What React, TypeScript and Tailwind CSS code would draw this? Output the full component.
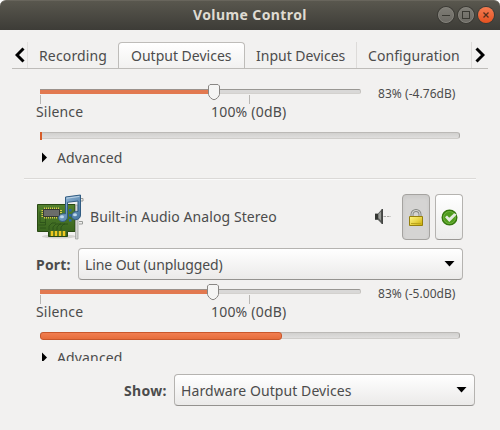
import { useState } from 'react'
import type { ReactNode } from 'react'

type ChannelProps = {
  value: number
  level: number
  db: string
}

// Volume slider with its marks, peak meter and expander
function Channel({ value, level, db }: ChannelProps) {
  return (
    <div className="h-[96px]">
      <div className="flex h-[52px] pl-[12px]">
        <div className="relative h-[51px] w-[321px] shrink-0">
          <div className="mt-[9px] h-[5px] w-full rounded-[2px] border border-t-[#999793] border-r-[#c4c2be] border-b-[#d3d1ce] border-l-[#bdbab7] bg-[#d9d8d7]" />
          <div
            className="absolute top-[9px] left-0 h-[5px] border-t border-[#9b918b] bg-[#e27950]"
            style={{ width: value }}
          />
          <svg
            className="absolute top-[4px] h-[17px] w-[12px]"
            style={{ left: value - 5 }}
            viewBox="0 0 12 17"
          >
            <path
              d="M2 .5h8l1.500 1.500v8.400c0 1.600-3.300 5.300-5.500 5.300S.5 12 .5 10.400V2z"
              fill="#f5f5f4"
              stroke="#898784"
            />
          </svg>
          <div className="absolute top-[15px] left-0 h-[9px] w-px bg-[#b8b6b3]" />
          <div className="absolute top-[15px] left-[209px] h-[9px] w-px bg-[#b8b6b3]" />
          <span className="absolute top-[22px] left-[-4px] leading-5 tracking-[0.17px]">Silence</span>
          <span className="absolute top-[22px] left-[171px] leading-5 tracking-[0.2px]">100% (0dB)</span>
        </div>
        <span className="mt-[6px] ml-[17px] text-[12px] leading-4 tracking-[0.05px]">{db}</span>
      </div>
      <div className="ml-[12px] h-[7px] w-[420px] rounded-[3px] border border-t-[#bbb9b6] border-r-[#aaa8a5] border-b-[#cfcdca] border-l-[#aaa8a5] bg-linear-to-b from-[#d1d0ce] to-[#dfdedd]">
        <div
          className={
            level > 10
              ? 'mt-[-1px] ml-[-1px] h-[8px] rounded-[3px] border border-[#c9572b] bg-linear-to-b from-[#f17e50] to-[#e66d3b]'
              : 'mt-[-1px] ml-[-1px] h-[8px] bg-[#d65c29]'
          }
          style={{ width: level }}
        />
      </div>
      <div className="flex h-[37px] items-center pl-[13px]">
        <svg className="mt-[-1px] h-[11px] w-[7px]" viewBox="0 0 7 11">
          <path d="M1 .5 6 5.5 1 10.5z" fill="#000" />
        </svg>
        <span className="ml-[9px] tracking-[0.15px]">Advanced</span>
      </div>
    </div>
  )
}

function Combo({ children, className }: { children: ReactNode; className: string }) {
  return (
    <button
      className={`flex h-[32px] items-center justify-between rounded-[4px] border border-[#b5b3b0] border-b-[#94928f] bg-linear-to-b from-white to-[#ebeae9] pr-[7px] pl-[6px] ${className}`}
    >
      <span>{children}</span>
      <svg className="h-[6px] w-[11px]" viewBox="0 0 11 6">
        <path d="M.5 0h10L5.5 5.5z" fill="#000" />
      </svg>
    </button>
  )
}

function SoundCardIcon() {
  return (
    <svg className="mt-[-2px] h-[48px] w-[48px] shrink-0" viewBox="0 0 48 48">
      <defs>
        <linearGradient id="board" x1="0" y1="0" x2="0" y2="1">
          <stop offset="0" stopColor="#52802e" />
          <stop offset="1" stopColor="#36611c" />
        </linearGradient>
        <linearGradient id="note" x1="0" y1="0" x2="1" y2="1">
          <stop offset="0" stopColor="#9bbddb" />
          <stop offset="1" stopColor="#3f719d" />
        </linearGradient>
      </defs>
      <ellipse cx="23" cy="44.5" rx="17" ry="2" fill="#d4d3d0" />
      <path d="M43 6.5h4v2.5h-3M43 29.5h3.5v2.5H43" fill="none" stroke="#9a9c99" />
      <path d="M1.5 12.5H39v27h-7.5v5h-19v-5h-11z" fill="url(#board)" stroke="#294913" />
      <path d="M39.5 13H42v34h-2.5z" fill="#d3d4d2" stroke="#999b98" strokeWidth=".7" />
      <path
        d="M9.5 27v6h-7M13 38v-4l3-3h4m-3 7v-3l3-3h5m-4 6v-3l3-3h5m-4 6v-3l3-3h4M4 36h6M4 19.5v11h5"
        fill="none"
        stroke="#294f18"
        strokeWidth=".8"
      />
      <path d="M8 16.5h16M8 25.5h16" stroke="#ddca4b" strokeWidth="2" strokeDasharray="1 1" />
      <path d="M6.5 18v7M25 18v7" stroke="#ddca4b" strokeWidth="2" strokeDasharray="1 1" />
      <path d="M7.5 17.5h16v7h-16z" fill="#6b6d6a" stroke="#353834" />
      <path d="M16 39v5m4-5v5m4-5v5m4-5v5" stroke="#efc922" strokeWidth="2.6" />
      <path d="M33 17h2.5v2.5H33zm0 5h2.5v2.5H33zm0 5h2.5v2.5H33z" fill="#2865a4" />
      <path
        d="M29.500 5 44.500 3v20c0 2.600-2 4.700-4.700 4.700-2.500 0-4.300-1.500-4.300-3.900 0-3 3-4.800 6.500-4.300V9l-10.500 1.300V25c0 2.600-2.300 4.500-4.800 4.500-2.600 0-4.200-1.500-4.200-3.700 0-2.700 3-4.500 7-4z"
        fill="url(#note)"
        stroke="#315c82"
      />
      <path d="M30.5 6.2 43.3 4.5" stroke="#bed4e6" />
      <ellipse cx="26" cy="24.7" rx="2" ry="1.5" fill="#bfd7e9" />
      <ellipse cx="39" cy="22.8" rx="2" ry="1.5" fill="#bfd7e9" />
    </svg>
  )
}

function SpeakerIcon() {
  return (
    <svg className="mt-[-2px] h-[17px] w-[18px]" viewBox="0 0 18 17">
      <path d="M1 5.5h3L8 1v15l-4-4H1z" fill="#5c5e5b" />
      <path d="M1 6h3v5H1z" fill="#343632" />
      <path d="M4.5 6 7 3.5v9L4.5 10z" fill="#9a9c98" />
      <path d="M8.3 1v15" stroke="#30322f" strokeWidth="1.2" />
      <path d="M9.5 8.5H17" stroke="#aaa9a6" strokeDasharray="2.5 1" />
    </svg>
  )
}

function LockIcon() {
  return (
    <svg className="h-[17px] w-[16px]" viewBox="0 0 16 17">
      <defs>
        <linearGradient id="lock" x1="0" y1="0" x2="1" y2="1">
          <stop offset="0" stopColor="#fff785" />
          <stop offset=".5" stopColor="#ead64a" />
          <stop offset="1" stopColor="#c6a900" />
        </linearGradient>
      </defs>
      <path d="M4 9V5.5a4 4 0 0 1 8 0V9" fill="none" stroke="#858783" strokeWidth="3" />
      <path d="M4 9V5.5a4 4 0 0 1 8 0V9" fill="none" stroke="#d2d3d0" strokeWidth="1.2" />
      <path d="M1.5 7.5h13v9h-13z" fill="url(#lock)" stroke="#96800d" />
      <path d="M3 14.5h10" stroke="#bba51e" />
    </svg>
  )
}

function CheckIcon() {
  return (
    <svg className="h-[17px] w-[17px]" viewBox="0 0 17 17">
      <circle cx="8.5" cy="8.5" r="7.3" fill="#4f9c1d" stroke="#34770d" strokeWidth="1.4" />
      <circle cx="8.5" cy="8.5" r="6" fill="none" stroke="#7cbd4c" strokeWidth=".7" />
      <path d="M4 8.200 6 6.600l2.200 2.200 5-4.600 2.600 1.300L8.300 13z" fill="#e4ebdf" />
    </svg>
  )
}

export default function App() {
  const [active, setActive] = useState('Output Devices')

  const tabs = [
    { name: 'Recording', style: 'w-[90px] pl-[11px] tracking-[0.15px]' },
    { name: 'Output Devices', style: 'w-[127px] pl-[12px]' },
    { name: 'Input Devices', style: 'w-[111px] pl-[11px]' },
    { name: 'Configuration', style: 'w-[115px] pl-[11px] border-l border-[#dddbd9] tracking-[0.08px]' },
  ]

  return (
    <div className="h-[430px] w-[500px] overflow-hidden bg-white font-['Noto_Sans','Open_Sans',sans-serif] text-[14px] text-[#4c4c4c]">
      <div className="flex h-full flex-col rounded-t-[6px] bg-[#f2f1f0]">
        {/* Title bar */}
        <div className="flex h-[30px] shrink-0 items-center rounded-t-[6px] border-t border-[#68655c] bg-linear-to-b from-[#59574e] to-[#3d3c37]">
          <span className="mt-[-2px] ml-[193px] w-[245px] font-bold tracking-[0.4px] text-[#dfdbd2]">Volume Control</span>
          <div className="mt-[-1px] flex gap-[4px]">
            <button className="flex h-[16px] w-[16px] items-center justify-center rounded-full border border-[#85837c] bg-linear-to-b from-[#7e7c75] to-[#6c6a64] ring-1 ring-[#3b3a35]">
              <span className="h-px w-[8px] bg-[#393832]" />
            </button>
            <button className="flex h-[16px] w-[16px] items-center justify-center rounded-full border border-[#85837c] bg-linear-to-b from-[#7e7c75] to-[#6c6a64] ring-1 ring-[#3b3a35]">
              <span className="h-[8px] w-[8px] border border-[#393832]" />
            </button>
            <button className="flex h-[16px] w-[16px] items-center justify-center rounded-full bg-linear-to-b from-[#f47b50] to-[#e6511e] ring-1 ring-[#3b3a35]">
              <svg className="h-[8px] w-[8px]" viewBox="0 0 8 8">
                <path d="m1.5 1.5 5 5m0-5-5 5" stroke="#55301e" strokeWidth="1.3" />
              </svg>
            </button>
          </div>
        </div>

        {/* Tabs */}
        <div className="mx-[12px] mt-[12px] flex h-[27px] shrink-0 border-b border-[#bebcb9]">
          <div className="w-[16px] border-r border-[#e2e0de] pt-[5px] pl-[3px]">
            <svg className="h-[16px] w-[10px]" viewBox="0 0 10 16">
              <path d="M8.5 1.5 2 8l6.5 6.5" fill="none" stroke="#000" strokeWidth="3" />
            </svg>
          </div>
          {tabs.map((t) => (
            <button
              key={t.name}
              onClick={() => setActive(t.name)}
              className={`${t.style} text-left whitespace-nowrap ${
                active === t.name
                  ? 'rounded-t-[4px] border border-b-0 border-[#bebcb9] bg-linear-to-b from-white to-[#f2f1f0]'
                  : 'pt-px'
              }`}
            >
              {t.name}
            </button>
          ))}
          <div className="w-[17px] border-l border-[#dddbd9] pt-[5px] pl-[3px]">
            <svg className="h-[16px] w-[10px]" viewBox="0 0 10 16">
              <path d="M1.5 1.5 8 8l-6.5 6.5" fill="none" stroke="#000" strokeWidth="3" />
            </svg>
          </div>
        </div>

        {/* Device list */}
        <div className="ml-[24px] h-[292px] shrink-0 overflow-hidden pt-[11px] pl-[4px]">
          <Channel value={173} level={2} db="83% (-4.76dB)" />
          <div className="-ml-[4px] mt-[2px] h-[2px] w-[452px] border-t border-[#dbd9d7] border-b border-b-[#fafafa]" />
          <div className="flex h-[68px] items-center pt-[6px] pl-[8px]">
            <SoundCardIcon />
            <span className="mt-[-2px] ml-[6px] w-[284px] tracking-[0.08px]">Built-in Audio Analog Stereo</span>
            <SpeakerIcon />
            <div className="ml-[10px] flex gap-[5px]">
              <button className="flex h-[46px] w-[28px] items-center justify-center rounded-[4px] border border-[#a5a3a0] bg-[#d5d4d3] shadow-inner">
                <LockIcon />
              </button>
              <button className="flex h-[46px] w-[28px] items-center justify-center rounded-[4px] border border-[#b5b3b0] border-b-[#9a9895] bg-linear-to-b from-white to-[#ececeb]">
                <CheckIcon />
              </button>
            </div>
          </div>
          <div className="flex items-center pl-[8px]">
            <span className="w-[42px] font-bold tracking-[0.2px]">Port:</span>
            <Combo className="w-[385px] tracking-[-0.1px]">Line Out (unplugged)</Combo>
          </div>
          <Channel value={172} level={242} db="83% (-5.00dB)" />
        </div>

        {/* Filter */}
        <div className="mt-[13px] flex items-center pl-[124px]">
          <span className="w-[50px] font-bold tracking-[0.3px]">Show:</span>
          <Combo className="w-[301px] tracking-[0.08px]">Hardware Output Devices</Combo>
        </div>
      </div>
    </div>
  )
}
